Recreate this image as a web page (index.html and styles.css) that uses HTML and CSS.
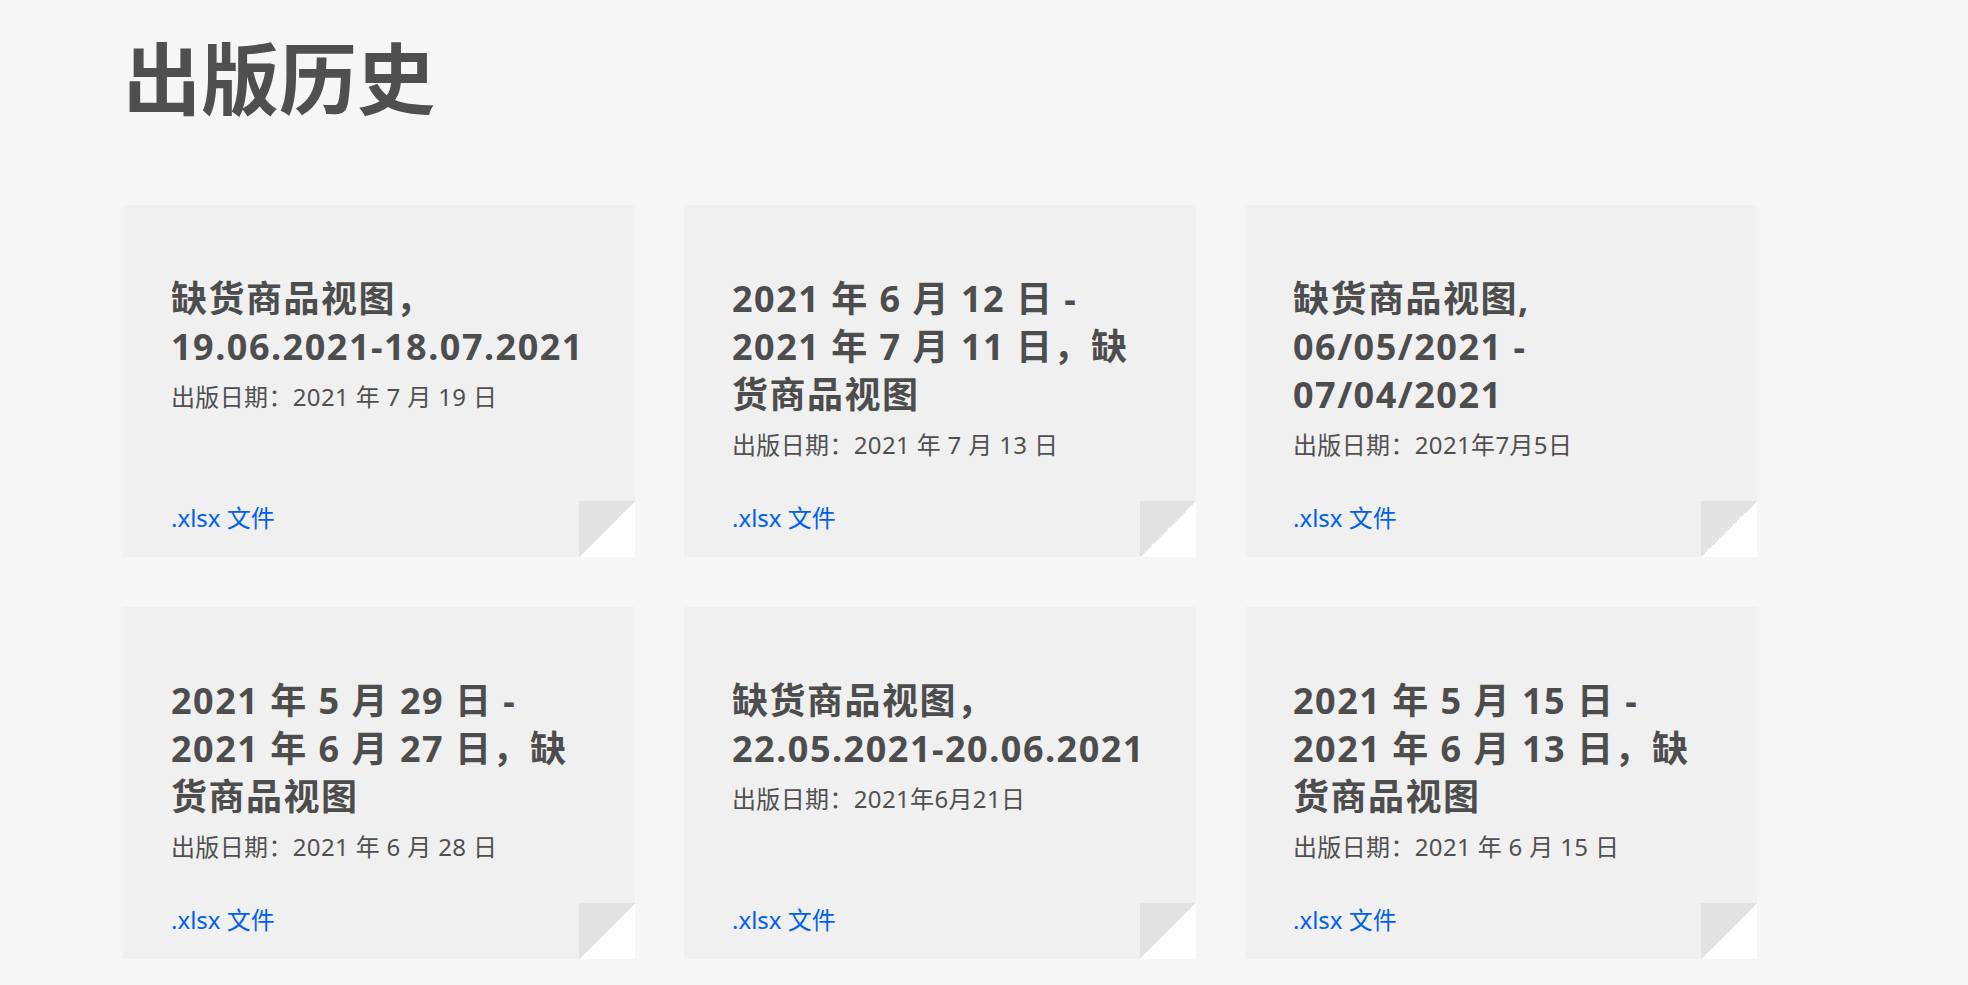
FILE: index.html
```html
<!DOCTYPE html>
<html lang="zh-CN">
<head>
  <meta charset="UTF-8">
  <meta name="viewport" content="width=device-width, initial-scale=1.0">
  <title>出版历史</title>
  <link rel="stylesheet" href="styles.css">
</head>
<body>

  <section class="history">
    <h1>出版历史</h1>

    <div class="card-grid">
      <div class="card">
        <h3>缺货商品视图，19.06.2021-18.07.2021</h3>
        <p class="date">出版日期：2021 年 7 月 19 日</p>
        <a class="file-link" href="#">.xlsx 文件</a>
        <span class="fold"></span>
      </div>

      <div class="card">
        <h3>2021 年 6 月 12 日 - 2021 年 7 月 11 日，缺货商品视图</h3>
        <p class="date">出版日期：2021 年 7 月 13 日</p>
        <a class="file-link" href="#">.xlsx 文件</a>
        <span class="fold"></span>
      </div>

      <div class="card">
        <h3>缺货商品视图, 06/05/2021 - 07/04/2021</h3>
        <p class="date">出版日期：2021年7月5日</p>
        <a class="file-link" href="#">.xlsx 文件</a>
        <span class="fold"></span>
      </div>

      <div class="card">
        <h3>2021 年 5 月 29 日 - 2021 年 6 月 27 日，缺货商品视图</h3>
        <p class="date">出版日期：2021 年 6 月 28 日</p>
        <a class="file-link" href="#">.xlsx 文件</a>
        <span class="fold"></span>
      </div>

      <div class="card">
        <h3>缺货商品视图，22.05.2021-20.06.2021</h3>
        <p class="date">出版日期：2021年6月21日</p>
        <a class="file-link" href="#">.xlsx 文件</a>
        <span class="fold"></span>
      </div>

      <div class="card">
        <h3>2021 年 5 月 15 日 - 2021 年 6 月 13 日，缺货商品视图</h3>
        <p class="date">出版日期：2021 年 6 月 15 日</p>
        <a class="file-link" href="#">.xlsx 文件</a>
        <span class="fold"></span>
      </div>
    </div>
  </section>

</body>
</html>
```

FILE: styles.css
```css
body {
  margin: 0;
  padding: 0;
  background-color: #f6f6f6;
  font-family: "Noto Sans", "Noto Sans CJK SC", sans-serif;
  color: #505050;
}

.history {
  padding: 0 123px;
}

h1 {
  margin: 33px 0 78px;
  font-size: 78px;
  line-height: 1.2;
  font-weight: bold;
  color: #4f4f4f;
}

.card-grid {
  display: grid;
  grid-template-columns: repeat(3, 512px);
  gap: 50px 49px;
}

.card {
  position: relative;
  display: flex;
  flex-direction: column;
  height: 352px;
  box-sizing: border-box;
  padding: 70px 48px 23px;
  background-color: #f0f0f0;
}

.card h3 {
  margin: 0;
  font-size: 36px;
  line-height: 48px;
  font-weight: bold;
  letter-spacing: 1.5px;
  color: #4d4d4d;
}

.date {
  margin: 10px 0 0;
  font-size: 24px;
  line-height: 32px;
  letter-spacing: 0.35px;
  color: #505050;
}

.file-link {
  margin-top: auto;
  font-size: 24px;
  line-height: 32px;
  color: #005ff0;
  text-decoration: none;
}

.fold {
  position: absolute;
  right: 0;
  bottom: 0;
  width: 56px;
  height: 56px;
  background: linear-gradient(to bottom right, #e2e2e2 50%, #ffffff 50%);
}
```
